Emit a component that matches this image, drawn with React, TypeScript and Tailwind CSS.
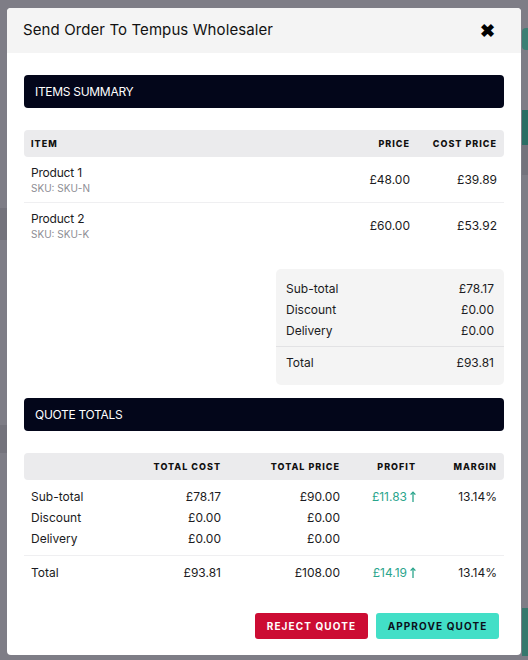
const items = [
  { name: 'Product 1', sku: 'SKU-N', price: '£48.00', cost: '£39.89' },
  { name: 'Product 2', sku: 'SKU-K', price: '£60.00', cost: '£53.92' },
];

const quoteRows = [
  { label: 'Sub-total', cost: '£78.17', price: '£90.00', profit: '£11.83', margin: '13.14%' },
  { label: 'Discount', cost: '£0.00', price: '£0.00' },
  { label: 'Delivery', cost: '£0.00', price: '£0.00' },
];

function SectionBar({ title }: { title: string }) {
  return (
    <div className="h-[33px] rounded-[4px] bg-[#03061a] px-[11px] flex items-center text-[12px] text-white tracking-[-0.3px]">
      {title}
    </div>
  );
}

function Profit({ value }: { value: string }) {
  return (
    <span className="inline-flex items-center gap-[3px] text-[#2aa58c]">
      {value}
      <svg width="6" height="11" viewBox="0 0 6 11" fill="none" stroke="currentColor" strokeWidth="1.3">
        <path d="M3 1.2V11" />
        <path d="M0.6 3.6L3 1.2L5.4 3.6" />
      </svg>
    </span>
  );
}

// faint page content behind the overlay
function Backdrop() {
  return (
    <div className="absolute inset-0 bg-[#7e7d86]">
      <div className="absolute right-0 top-[28px] w-[6px] h-[22px] rounded-l bg-[#3c7f74]" />
      <div className="absolute right-0 top-[110px] w-[6px] h-[35px] bg-[#2a6e64]" />
      <div className="absolute right-0 top-[145px] w-[6px] h-[30px] bg-[#74737c]" />
      <div className="absolute right-0 top-[608px] w-[6px] h-[48px] bg-[#37786d]" />
      <div className="absolute left-0 top-[208px] w-[7px] h-[32px] bg-[#74737c]" />
      <div className="absolute left-0 top-[425px] w-[7px] h-[28px] bg-[#74737c]" />
    </div>
  );
}

export default function App() {
  return (
    <div className="relative w-[528px] h-[660px] overflow-hidden font-['Inter','Noto_Sans',sans-serif] text-[#1b1b22]">
      <Backdrop />

      {/* Modal */}
      <div className="absolute left-[7px] top-[8px] w-[514px] h-[647px] bg-white rounded-[4px] overflow-hidden">
        <div className="h-[45px] bg-[#f4f4f4] flex items-center justify-between pl-[16px] pr-[26px]">
          <h1 className="text-[15px] text-[#111] tracking-[0.1px]">Send Order To Tempus Wholesaler</h1>
          <span className="text-[18px] font-bold leading-none text-black">✖</span>
        </div>

        <div className="px-[17px] pt-[22px]">
          <SectionBar title="ITEMS SUMMARY" />

          {/* Items table */}
          <div className="mt-[22px]">
            <div className="h-[27px] rounded-[4px] bg-[#ebebed] px-[7px] grid grid-cols-[1fr_69px_87px] items-center text-[9px] font-extrabold tracking-[1px] text-[#111]">
              <span>ITEM</span>
              <span className="text-right">PRICE</span>
              <span className="text-right">COST PRICE</span>
            </div>
            {items.map((it, i) => (
              <div
                key={it.name}
                className={`h-[46px] px-[7px] grid grid-cols-[1fr_69px_87px] items-center text-[12px] ${
                  i === 0 ? 'border-b border-[#efeff1]' : ''
                }`}
              >
                <div className="flex flex-col">
                  <span className="leading-[16px] tracking-[-0.2px]">{it.name}</span>
                  <span className="text-[10px] leading-[14px] text-[#8d8d94]">SKU: {it.sku}</span>
                </div>
                <span className="text-right">{it.price}</span>
                <span className="text-right">{it.cost}</span>
              </div>
            ))}
          </div>

          {/* Summary box */}
          <div className="flex justify-end mt-[20px]">
            <div className="w-[228px] rounded-[5px] bg-[#f4f4f4] px-[10px] pt-[9px] pb-[7px] text-[12px]">
              <div className="flex justify-between h-[21px] items-center">
                <span>Sub-total</span>
                <span>£78.17</span>
              </div>
              <div className="flex justify-between h-[21px] items-center">
                <span>Discount</span>
                <span>£0.00</span>
              </div>
              <div className="flex justify-between h-[21px] items-center">
                <span>Delivery</span>
                <span>£0.00</span>
              </div>
              <div className="-mx-[10px] border-t border-[#e2e2e4] mt-[5px]" />
              <div className="flex justify-between h-[31px] items-center">
                <span>Total</span>
                <span>£93.81</span>
              </div>
            </div>
          </div>

          <div className="mt-[13px]">
            <SectionBar title="QUOTE TOTALS" />
          </div>

          {/* Quote totals table */}
          <div className="mt-[22px]">
            <div className="h-[27px] rounded-[4px] bg-[#ebebed] px-[7px] grid grid-cols-[1fr_90px_119px_76px_81px] items-center text-[9px] font-extrabold tracking-[1px] text-[#111]">
              <span />
              <span className="text-right">TOTAL COST</span>
              <span className="text-right">TOTAL PRICE</span>
              <span className="text-right">PROFIT</span>
              <span className="text-right">MARGIN</span>
            </div>
            <div className="pt-[6px] pb-[6px] border-b border-[#efeff1]">
              {quoteRows.map((r) => (
                <div
                  key={r.label}
                  className="h-[21px] px-[7px] grid grid-cols-[1fr_90px_119px_76px_81px] items-center text-[12px]"
                >
                  <span>{r.label}</span>
                  <span className="text-right">{r.cost}</span>
                  <span className="text-right">{r.price}</span>
                  <span className="text-right">{r.profit ? <Profit value={r.profit} /> : null}</span>
                  <span className="text-right">{r.margin ?? ''}</span>
                </div>
              ))}
            </div>
            <div className="h-[33px] px-[7px] grid grid-cols-[1fr_90px_119px_76px_81px] items-center text-[12px]">
              <span>Total</span>
              <span className="text-right">£93.81</span>
              <span className="text-right">£108.00</span>
              <span className="text-right">
                <Profit value="£14.19" />
              </span>
              <span className="text-right">13.14%</span>
            </div>
          </div>

          {/* Actions */}
          <div className="flex justify-end gap-[8px] mt-[24px] pr-[5px]">
            <button className="w-[113px] h-[26px] rounded-[3px] bg-[#cc0c33] text-white text-[10px] font-bold tracking-[1.1px]">
              REJECT QUOTE
            </button>
            <button className="w-[123px] h-[26px] rounded-[3px] bg-[#42dfc7] text-[#0c0f1a] text-[10px] font-bold tracking-[1.1px]">
              APPROVE QUOTE
            </button>
          </div>
        </div>
      </div>
    </div>
  );
}
